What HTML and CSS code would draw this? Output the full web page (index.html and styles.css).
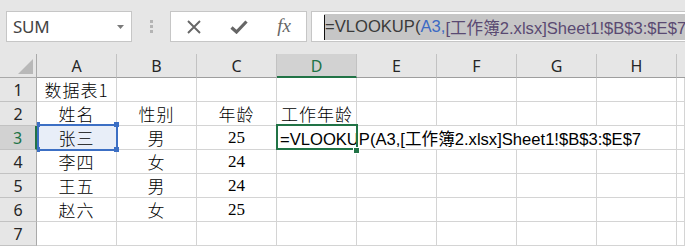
FILE: index.html
```html
<!DOCTYPE html>
<html lang="zh-CN">
<head>
<meta charset="utf-8">
<title>Excel VLOOKUP</title>
<link rel="stylesheet" href="styles.css">
</head>
<body>
<div class="app">
  <div class="toolbar">
    <div class="namebox">
      <span class="name">SUM</span>
      <svg class="dd" width="7" height="4" viewBox="0 0 7 4"><path d="M0 0H7L3.5 4Z" fill="#7a7a7a"/></svg>
    </div>
    <div class="grip"><i></i><i></i><i></i></div>
    <div class="fbtns">
      <span class="btn"><svg width="14" height="14" viewBox="0 0 14 14"><path d="M1 1L13 13M13 1L1 13" stroke="#666" stroke-width="1.9" fill="none"/></svg></span>
      <span class="btn"><svg width="18" height="14" viewBox="0 0 18 14"><path d="M1.5 7.5L6.5 12L16.5 1.5" stroke="#666" stroke-width="3.2" fill="none"/></svg></span>
      <span class="btn fx">fx</span>
    </div>
    <div class="fbar">
      <span class="sel"><span class="caret"></span>=VLOOKUP(<span class="r1">A3,</span><span class="r2">[工作簿2.xlsx]Sheet1!$B$3:$E$7</span></span>
    </div>
  </div>

  <div class="sheet">
    <div class="corner"><svg width="17" height="17" viewBox="0 0 17 17"><path d="M16 1V16H1Z" fill="#b8b8b8"/></svg></div>
    <div class="ch">A</div><div class="ch">B</div><div class="ch">C</div><div class="ch on">D</div>
    <div class="ch">E</div><div class="ch">F</div><div class="ch">G</div><div class="ch">H</div><div class="ch last"></div>

    <div class="rh">1</div>
    <div class="c cjk">数据表1</div><div class="c"></div><div class="c"></div><div class="c"></div>
    <div class="c"></div><div class="c"></div><div class="c"></div><div class="c"></div><div class="c"></div>

    <div class="rh">2</div>
    <div class="c cjk">姓名</div><div class="c cjk">性别</div><div class="c cjk">年龄</div><div class="c cjk left">工作年龄</div>
    <div class="c"></div><div class="c"></div><div class="c"></div><div class="c"></div><div class="c"></div>

    <div class="rh on">3</div>
    <div class="c cjk a3">张三<span class="selbox"></span><span class="hd tl"></span><span class="hd tr"></span><span class="hd bl"></span><span class="hd br"></span></div>
    <div class="c cjk">男</div><div class="c num">25</div>
    <div class="c d3">=VLOOKUP(A3,[工作簿2.xlsx]Sheet1!$B$3:$E$7<span class="actbox"></span><span class="fill"></span></div>
    <div class="c"></div>

    <div class="rh">4</div>
    <div class="c cjk">李四</div><div class="c cjk">女</div><div class="c num">24</div><div class="c"></div>
    <div class="c"></div><div class="c"></div><div class="c"></div><div class="c"></div><div class="c"></div>

    <div class="rh">5</div>
    <div class="c cjk">王五</div><div class="c cjk">男</div><div class="c num">24</div><div class="c"></div>
    <div class="c"></div><div class="c"></div><div class="c"></div><div class="c"></div><div class="c"></div>

    <div class="rh">6</div>
    <div class="c cjk">赵六</div><div class="c cjk">女</div><div class="c num">25</div><div class="c"></div>
    <div class="c"></div><div class="c"></div><div class="c"></div><div class="c"></div><div class="c"></div>

    <div class="rh">7</div>
    <div class="c"></div><div class="c"></div><div class="c"></div><div class="c"></div>
    <div class="c"></div><div class="c"></div><div class="c"></div><div class="c"></div><div class="c"></div>
  </div>
</div>
</body>
</html>
```

FILE: styles.css
```css
html, body {
  margin: 0;
  padding: 0;
  background: #ffffff;
  overflow: hidden;
}
.app {
  width: 685px;
  height: 246px;
  overflow: hidden;
  font-family: "Liberation Sans", "Noto Sans CJK SC", sans-serif;
}

/* ---------- toolbar ---------- */
.toolbar {
  height: 54px;
  background: #e6e6e6;
  display: flex;
  align-items: flex-start;
  padding-top: 11px;
  box-sizing: border-box;
}
.namebox {
  margin-left: 6px;
  width: 126px;
  height: 31px;
  box-sizing: border-box;
  background: #fff;
  border: 1px solid #c6c6c6;
  display: flex;
  align-items: center;
  padding-left: 6px;
  padding-right: 7px;
}
.name {
  flex: 1;
  font-family: "Noto Sans", sans-serif;
  font-size: 17px;
  color: #444;
  letter-spacing: -0.3px;
}
.dd { display: block; margin-top: 1px; }

.grip {
  margin-left: 18px;
  margin-top: 9px;
  width: 3px;
  display: flex;
  flex-direction: column;
  gap: 2px;
}
.grip i {
  display: block;
  width: 3px;
  height: 3px;
  background: #b4b4b4;
}

.fbtns {
  margin-left: 17px;
  width: 137px;
  height: 31px;
  box-sizing: border-box;
  background: #fff;
  border: 1px solid #c6c6c6;
  display: grid;
  grid-template-columns: repeat(3, 45px);
  align-items: center;
}
.btn {
  display: flex;
  justify-content: center;
  align-items: center;
}
.btn svg { display: block; }
.fx {
  font-family: "Liberation Serif", serif;
  font-style: italic;
  font-size: 19px;
  color: #666;
  margin-top: -1px;
  padding-left: 1px;
}

.fbar {
  margin-left: 4px;
  flex: 1;
  margin-right: -20px;
  height: 31px;
  box-sizing: border-box;
  background: #fff;
  border: 1px solid #c6c6c6;
  padding: 2px 0 0 12px;
}
.sel {
  display: inline-flex;
  align-items: center;
  height: 26px;
  background: #c6c6c6;
  font-size: 16.6px;
  color: #3a3a3a;
  white-space: nowrap;
  padding-right: 2px;
}
.caret {
  display: inline-block;
  width: 1px;
  height: 25px;
  background: #111;
}
.r1 { color: #3c6ac4; }
.r2 { color: #5a4a72; }

/* ---------- sheet ---------- */
.sheet {
  display: grid;
  grid-template-columns: 37px repeat(8, 80px) 1fr;
  grid-auto-rows: 24px;
}
.corner {
  background: #e6e6e6;
  border-right: 1px solid #a9a9a9;
  border-bottom: 1px solid #a9a9a9;
  display: flex;
  justify-content: flex-end;
  align-items: flex-end;
  padding: 0 2px 2px 0;
}
.corner svg { display: block; }
.ch {
  background: #e6e6e6;
  border-right: 1px solid #c2c2c2;
  border-bottom: 1px solid #9e9e9e;
  display: flex;
  justify-content: center;
  align-items: center;
  font-family: "Noto Sans", sans-serif;
  font-size: 16px;
  color: #262626;
  padding-top: 1px;
}
.ch.on {
  background: #d2d2d2;
  color: #217346;
  border-bottom: 2px solid #217346;
}
.ch.last { border-right: none; }
.rh {
  background: #e6e6e6;
  border-right: 1px solid #a9a9a9;
  border-bottom: 1px solid #c2c2c2;
  display: flex;
  justify-content: center;
  align-items: center;
  font-family: "Noto Sans", sans-serif;
  font-size: 16px;
  color: #262626;
}
.rh.on {
  background: #d2d2d2;
  color: #217346;
  border-right: 2px solid #217346;
}
.c {
  border-right: 1px solid #d4d4d4;
  border-bottom: 1px solid #d4d4d4;
  display: flex;
  justify-content: center;
  align-items: center;
  font-size: 16.6px;
  color: #000;
  white-space: nowrap;
}
.cjk {
  font-family: "Noto Sans CJK SC", sans-serif;
  font-weight: 300;
  font-size: 17px;
  letter-spacing: 1px;
  color: #000;
}
.left { justify-content: flex-start; padding-left: 4px; }
.num {
  font-family: "Liberation Serif", serif;
  font-size: 17px;
}
.a3 {
  position: relative;
  background: #e8eef8;
}
.selbox {
  position: absolute;
  left: 0;
  top: -2px;
  width: 81px;
  height: 27px;
  box-sizing: border-box;
  border: 2px solid #3c6fc4;
}
.hd {
  position: absolute;
  width: 5px;
  height: 5px;
  background: #3c6fc4;
}
.hd.tr { left: 77px; top: -4px; }
.hd.br { left: 77px; top: 21px; }
.hd.tl { left: 0; top: -4px; width: 3px; }
.hd.bl { left: 0; top: 21px; width: 3px; }

.d3 {
  grid-column: span 5;
  position: relative;
  justify-content: flex-start;
  padding-left: 3px;
}
.actbox {
  position: absolute;
  left: -1px;
  top: -2px;
  width: 82px;
  height: 26px;
  box-sizing: border-box;
  border: 2px solid #217346;
}
.fill {
  position: absolute;
  left: 76px;
  top: 21px;
  width: 5px;
  height: 5px;
  background: #217346;
  border: 1px solid #fff;
}
```
